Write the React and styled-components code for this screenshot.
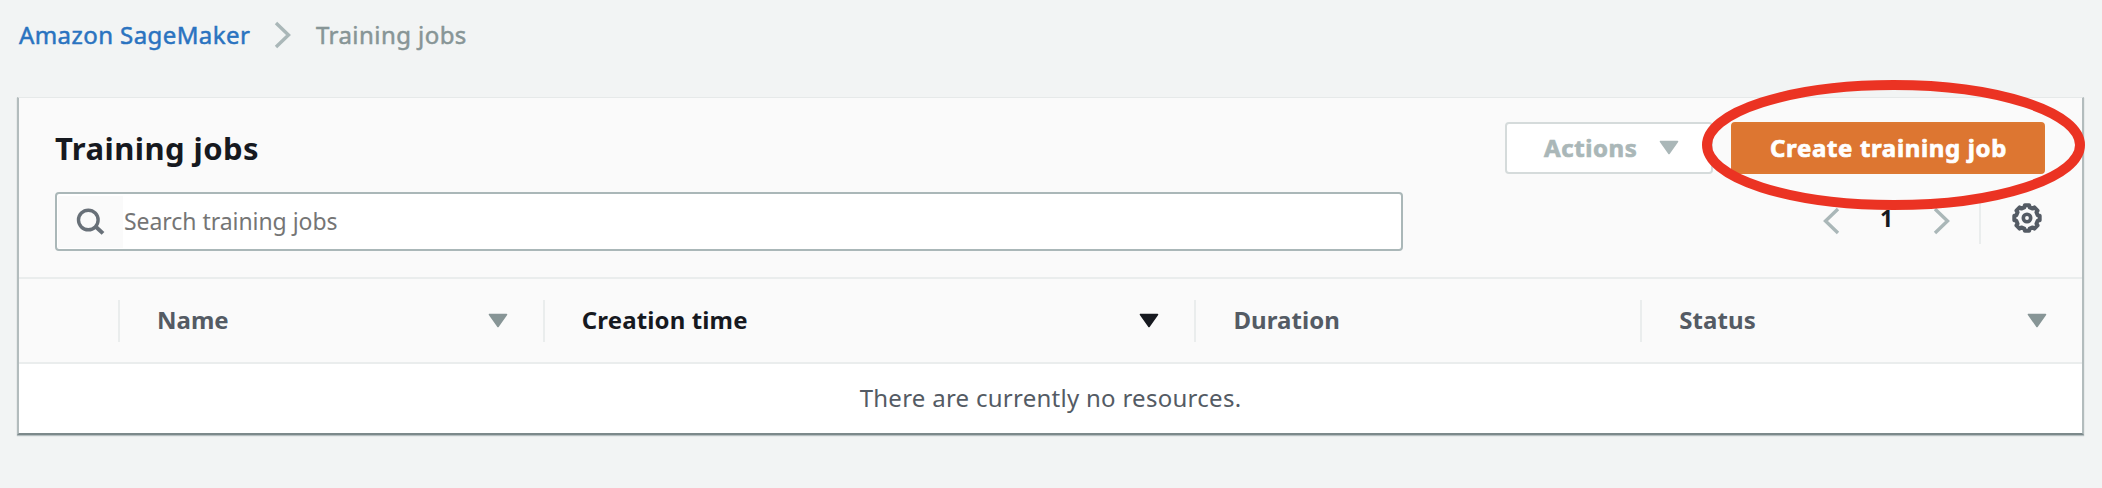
import React from "react";
import styled, { createGlobalStyle } from "styled-components";

const GlobalStyle = createGlobalStyle`
  * { box-sizing: border-box; }
  body {
    margin: 0;
    background: #f2f4f4;
    font-family: "Noto Sans", "Open Sans", sans-serif;
    font-size: 24px;
    line-height: 36px;
    color: #545b64;
  }
`;

const Page = styled.main`
  position: relative;
  width: 2102px;
  height: 488px;
  padding: 16px 18px 0 17px;
  background: #f2f4f4;
  overflow: hidden;
`;

const Label = styled.span`
  letter-spacing: ${(p) => p.$spacing || 0}px;
  white-space: nowrap;
`;

const Breadcrumbs = styled.nav`
  display: flex;
  align-items: center;
  height: 38px;
  padding-left: 2px;
`;

const Crumb = styled(Label)`
  width: ${(p) => p.$width}px;
  margin-bottom: 1px;
  color: ${(p) => (p.$current ? "#879596" : "#2a73c0")};
  -webkit-text-stroke: 0.5px currentColor;
`;

const CrumbArrow = styled.svg`
  flex: none;
  margin: 0 25px 0 23px;
`;

const Panel = styled.section`
  width: 2067px;
  height: 338px;
  margin-top: 43px;
  background: #fff;
  border: 2px solid #b3bcbd;
  border-top: 1px solid #e6e9e9;
  border-bottom: 2px solid #7c898b;
  box-shadow: 0 1px 1px rgba(0, 28, 36, 0.25);
`;

const PanelHeader = styled.header`
  height: 181px;
  padding: 24px 37px 0 36px;
  background: #fafafa;
  border-bottom: 2px solid #eaeded;
`;

const TitleRow = styled.div`
  display: flex;
  justify-content: space-between;
  height: 70px;
`;

const Title = styled.h2`
  margin: 6px 0 0;
  font-size: 31px;
  line-height: 40px;
  font-weight: 700;
  color: #16191f;
  letter-spacing: 0.43px;
`;

const Buttons = styled.div`
  display: flex;
  gap: 18px;
`;

const Button = styled.button`
  display: flex;
  align-items: center;
  justify-content: space-between;
  width: ${(p) => p.$width}px;
  height: 52px;
  padding: 0 ${(p) => (p.$primary ? 30 : 32)}px 1px 37px;
  border: 2px solid ${(p) => (p.$primary ? "#dd7932" : "#d5dbdb")};
  border-radius: 4px;
  background: ${(p) => (p.$primary ? "#dd7631" : "#fff")};
  color: ${(p) => (p.$primary ? "#fff" : "#aab7b8")};
  font: 700 24px/36px "Noto Sans", "Open Sans", sans-serif;
  -webkit-text-stroke: 0.7px currentColor;
`;

const ToolRow = styled.div`
  display: flex;
  justify-content: space-between;
`;

const SearchBox = styled.div`
  display: flex;
  align-items: center;
  width: 1348px;
  height: 59px;
  padding: 1px;
  border: 2px solid #aab7b8;
  border-radius: 4px;
  background: #fff;
  color: #757575;
  font-size: 23px;
`;

const Placeholder = styled(Label)`
  margin: 0 0 1px 1px;
  letter-spacing: -0.05px;
`;

const SearchIcon = styled.span`
  display: flex;
  align-items: center;
  width: 65px;
  height: 52px;
  padding-left: 18px;
  background: #fafafa;
`;

const Pager = styled.div`
  display: flex;
  align-items: center;
  height: 58px;
  color: #16191f;
  font-size: 23px;
  font-weight: 700;
`;

const PageNumber = styled.span`
  width: 93px;
  padding-bottom: 7px;
  text-align: center;
`;

const Settings = styled.div`
  display: flex;
  align-items: center;
  justify-content: flex-end;
  width: 63px;
  height: 42px;
  margin: 4px 3px 0 29px;
  padding-bottom: 11px;
  border-left: 2px solid #eaeded;
`;

const Columns = styled.div`
  display: flex;
  align-items: center;
  height: 85px;
  padding-left: 99px;
  background: #fafafa;
  border-bottom: 2px solid #eaeded;
  font-weight: 700;
`;

const Column = styled.div`
  display: flex;
  align-items: center;
  justify-content: space-between;
  width: ${(p) => p.$width}px;
  height: 42px;
  padding: 0 35px 0 37px;
  border-left: 2px solid #eaeded;
  color: ${(p) => (p.$sorted ? "#16191f" : "#545b64")};
`;

const ColumnName = styled(Label)`
  margin-bottom: 2px;
`;

const Empty = styled.div`
  display: flex;
  justify-content: center;
  padding: 16px 0 0 0;
`;

const Highlight = styled.svg`
  position: absolute;
  left: 1700px;
  top: 78px;
  pointer-events: none;
`;

const Chevron = ({ as: Svg = "svg", left, color = "#aab7b8" }) => (
  <Svg width="17" height="28" viewBox="0 0 17 28" fill="none">
    <path d={left ? "M15 2 2.5 14 15 26" : "M2 2 14.5 14 2 26"} stroke={color} strokeWidth="3.4" />
  </Svg>
);

const Triangle = ({ color }) => (
  <svg width="20" height="15" viewBox="0 0 20 15">
    <path d="M1.5 1.5h17L10 13.5z" fill={color} stroke={color} strokeWidth="1.6" strokeLinejoin="round" />
  </svg>
);

const gearPoints = Array.from({ length: 8 }, (_, i) => i * 45)
  .flatMap((a) => [[a - 14, 11], [a - 10, 12.9], [a + 10, 12.9], [a + 14, 11]])
  .map(([a, r]) => {
    const t = (a * Math.PI) / 180;
    return `${(15 + r * Math.sin(t)).toFixed(2)},${(15 - r * Math.cos(t)).toFixed(2)}`;
  })
  .join(" ");

const Gear = () => (
  <svg width="30" height="30" viewBox="0 0 30 30" fill="none" stroke="#545b64" strokeWidth="4">
    <polygon points={gearPoints} strokeLinejoin="round" />
    <circle cx="15" cy="15" r="3.7" strokeWidth="3.6" />
  </svg>
);

const columns = [
  { name: "Name", width: 425, spacing: 0, arrow: "#879596" },
  { name: "Creation time", width: 652, spacing: 0.13, arrow: "#16191f", sorted: true },
  { name: "Duration", width: 446, spacing: 0.05 },
  { name: "Status", width: 442, spacing: 0.1, arrow: "#879596" },
];

export default function App() {
  return (
    <Page>
      <GlobalStyle />
      <Breadcrumbs>
        <Crumb $width={232} $spacing={0.42}>Amazon SageMaker</Crumb>
        <Chevron as={CrumbArrow} />
        <Crumb $current $width={160} $spacing={0.44}>Training jobs</Crumb>
      </Breadcrumbs>
      <Panel>
        <PanelHeader>
          <TitleRow>
            <Title>Training jobs</Title>
            <Buttons>
              <Button $width={208}>
                <Label $spacing={0.6}>Actions</Label>
                <Triangle color="#aab7b8" />
              </Button>
              <Button $primary $width={314}>
                <Label $spacing={0.65}>Create training job</Label>
              </Button>
            </Buttons>
          </TitleRow>
          <ToolRow>
            <SearchBox>
              <SearchIcon>
                <svg width="29" height="28" viewBox="0 0 29 28" fill="none" stroke="#687078">
                  <circle cx="12.3" cy="12" r="9.8" strokeWidth="3.4" />
                  <path d="M19.2 18.2 27 25.4" strokeWidth="4" />
                </svg>
              </SearchIcon>
              <Placeholder>Search training jobs</Placeholder>
            </SearchBox>
            <Pager>
              <Chevron left />
              <PageNumber>1</PageNumber>
              <Chevron />
              <Settings>
                <Gear />
              </Settings>
            </Pager>
          </ToolRow>
        </PanelHeader>
        <Columns>
          {columns.map((c) => (
            <Column key={c.name} $width={c.width} $sorted={c.sorted}>
              <ColumnName $spacing={c.spacing}>{c.name}</ColumnName>
              {c.arrow && <Triangle color={c.arrow} />}
            </Column>
          ))}
        </Columns>
        <Empty>
          <Label $spacing={0.27}>There are currently no resources.</Label>
        </Empty>
      </Panel>
      <Highlight width="388" height="134" viewBox="0 0 388 134">
        <ellipse cx="193.5" cy="67" rx="186.5" ry="60" fill="none" stroke="#eb3323" strokeWidth="10" />
      </Highlight>
    </Page>
  );
}
